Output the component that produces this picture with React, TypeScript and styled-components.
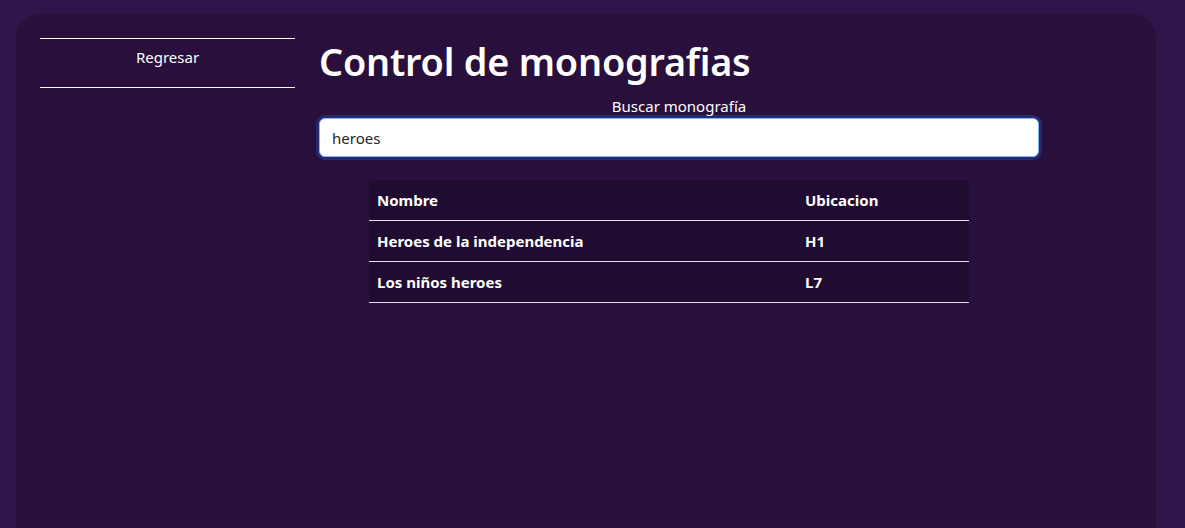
import React from "react";
import styled, { createGlobalStyle } from "styled-components";

const Global = createGlobalStyle`
  html, body { margin: 0; padding: 0; background: #31154a; }
  body { font-family: "Noto Sans", "Open Sans", sans-serif; color: #fff; }
  * { box-sizing: border-box; }
`;

const Page = styled.div`
  padding: 14px 29px 0 16px;
  height: 528px;
  overflow: hidden;
`;

const Card = styled.div`
  background: #29103c;
  border-radius: 24px 24px 0 0;
  height: 600px;
  padding: 24px 24px;
  display: flex;
  gap: 24px;
`;

const Sidebar = styled.nav`
  width: 255px;
  flex-shrink: 0;
`;

const NavLink = styled.a`
  display: block;
  border-top: 1px solid #fff;
  border-bottom: 1px solid #fff;
  height: 50px;
  padding-top: 8px;
  text-align: center;
  font-size: 15px;
  color: #fff;
  text-decoration: none;
`;

const Main = styled.main`
  width: 720px;
`;

const Title = styled.h1`
  margin: 1px 0 0;
  font-size: 37.8px;
  font-weight: 600;
  line-height: 46px;
  letter-spacing: -0.2px;
`;

const Label = styled.label`
  display: block;
  text-align: center;
  font-size: 15px;
  line-height: 20px;
  margin-top: 11px;
`;

const Input = styled.input`
  display: block;
  width: 100%;
  height: 39px;
  border: 1px solid #86b7fe;
  border-radius: 6px;
  box-shadow: 0 0 0 3px #232a6e;
  outline: none;
  padding: 0 12px;
  font-family: "Noto Sans", "Open Sans", sans-serif;
  font-size: 15px;
  color: #212529;
  background: #fff;
  margin-top: 2px;
`;

const Table = styled.table`
  margin: 23px 0 0 50px;
  width: 600px;
  border-collapse: collapse;
  background: #200c30;
`;

const Cell = styled.td<{ $w?: number; $head?: boolean }>`
  padding: 0 8px;
  height: ${(p) => (p.$head ? "40px" : "41px")};
  border-bottom: 1px solid #e6e0ec;
  font-weight: 700;
  font-size: 15px;
  color: #fff;
  text-align: left;
  width: ${(p) => (p.$w ? `${p.$w}px` : "auto")};
`;

const HeadCell = styled(Cell).attrs({ as: "th", $head: true })``;

const rows = [
  ["Heroes de la independencia", "H1"],
  ["Los niños heroes", "L7"],
];

export default function App() {
  return (
    <>
      <Global />
      <Page>
        <Card>
          <Sidebar>
            <NavLink href="#">Regresar</NavLink>
          </Sidebar>
          <Main>
            <Title>Control de monografias</Title>
            <Label htmlFor="buscar">Buscar monografía</Label>
            <Input id="buscar" defaultValue="heroes" autoFocus />
            <Table>
              <thead>
                <tr>
                  <HeadCell $w={428}>Nombre</HeadCell>
                  <HeadCell>Ubicacion</HeadCell>
                </tr>
              </thead>
              <tbody>
                {rows.map(([n, u]) => (
                  <tr key={n}>
                    <Cell>{n}</Cell>
                    <Cell>{u}</Cell>
                  </tr>
                ))}
              </tbody>
            </Table>
          </Main>
        </Card>
      </Page>
    </>
  );
}
